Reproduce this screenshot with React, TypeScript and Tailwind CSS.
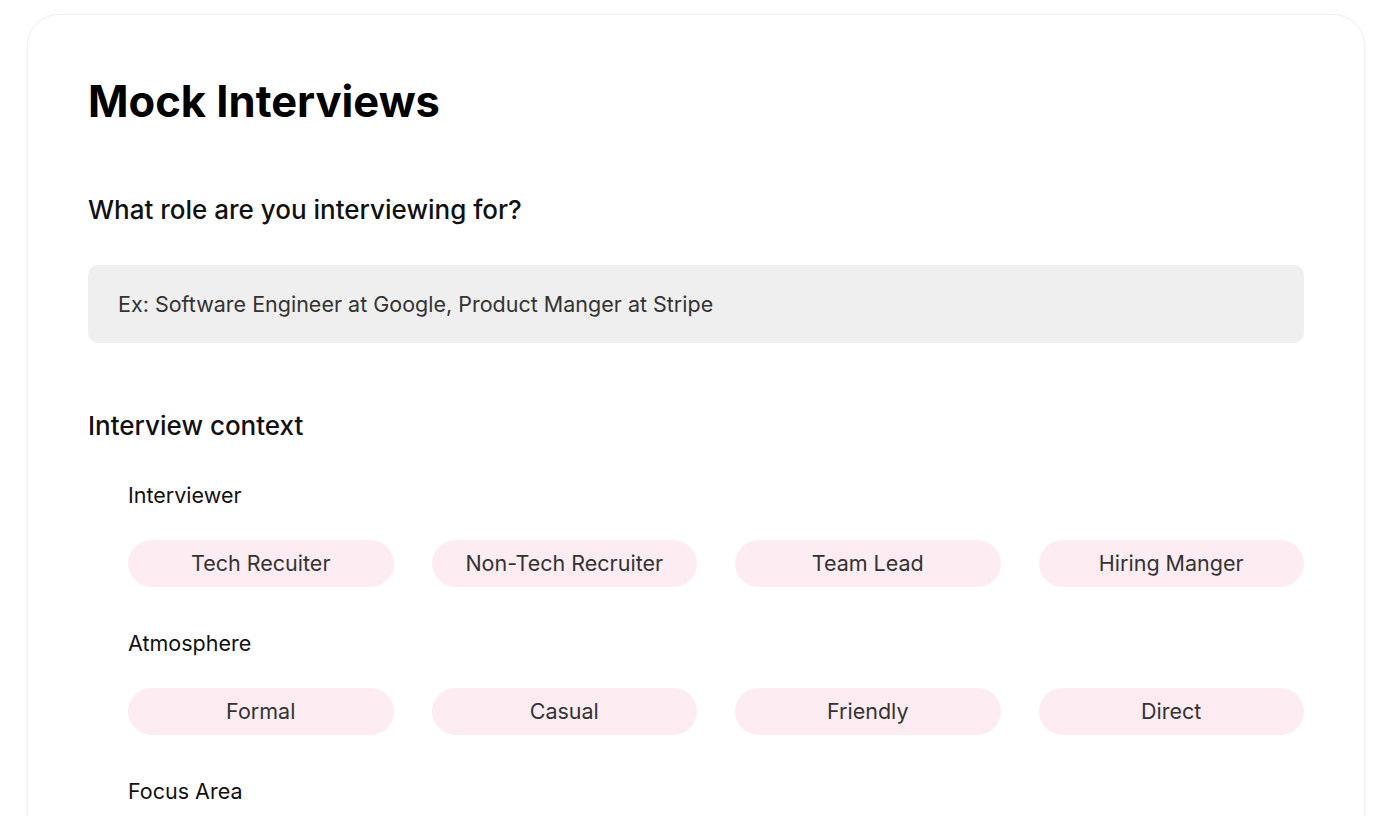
import { useState } from 'react';

const interviewers = ['Tech Recuiter', 'Non-Tech Recruiter', 'Team Lead', 'Hiring Manger'];
const atmospheres = ['Formal', 'Casual', 'Friendly', 'Direct'];

function OptionGroup({ label, options = [] }: { label: string; options?: string[] }) {
  const [selected, setSelected] = useState<string | null>(null);

  return (
    <div>
      <p className="text-[21.5px] leading-[28px] text-[#111]">{label}</p>
      {options.length > 0 && (
        <div className="mt-[31px] grid grid-cols-4 gap-[38px]">
          {options.map((opt) => (
            <button
              key={opt}
              type="button"
              onClick={() => setSelected(opt)}
              className={`h-[47px] rounded-full text-[21.5px] text-[#333] ${
                selected === opt ? 'bg-[#fbd3e0]' : 'bg-[#fdedf2]'
              }`}
            >
              {opt}
            </button>
          ))}
        </div>
      )}
    </div>
  );
}

export default function App() {
  const [role, setRole] = useState('');

  return (
    <div className="h-screen overflow-hidden bg-white font-['Inter',sans-serif]">
      <div className="mx-[27px] mt-[14px] min-h-[900px] rounded-[32px] border border-[#f0f0f0] bg-white px-[60px] pt-[62px] shadow-[0_0_6px_rgba(0,0,0,0.03)]">
        <h1 className="text-[43.5px] leading-[48px] font-bold text-black">Mock Interviews</h1>

        <h2 className="mt-[69px] text-[26px] leading-[32px] font-medium text-[#111]">
          What role are you interviewing for?
        </h2>
        <input
          type="text"
          value={role}
          onChange={(e) => setRole(e.target.value)}
          placeholder="Ex: Software Engineer at Google, Product Manger at Stripe"
          className="mt-[39px] h-[78px] w-full rounded-[10px] bg-[#efefef] px-[30px] text-[21.5px] text-[#333] placeholder:text-[#333] outline-none"
        />

        <h2 className="mt-[67px] text-[26px] leading-[32px] font-medium text-[#111]">Interview context</h2>

        <div className="mt-[39px] flex flex-col gap-[42px] pl-[40px]">
          <OptionGroup label="Interviewer" options={interviewers} />
          <OptionGroup label="Atmosphere" options={atmospheres} />
          <OptionGroup label="Focus Area" />
        </div>
      </div>
    </div>
  );
}
